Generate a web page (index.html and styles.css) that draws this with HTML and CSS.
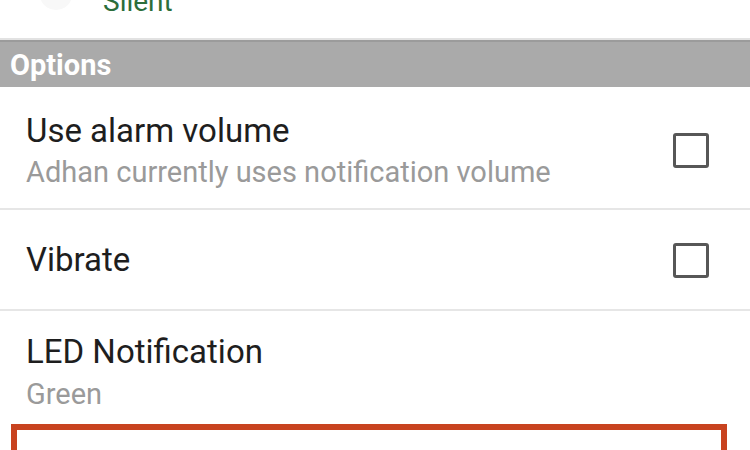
FILE: index.html
```html
<!DOCTYPE html>
<html lang="en">
<head>
  <meta charset="UTF-8" />
  <meta name="viewport" content="width=device-width, initial-scale=1.0"/>
  <title>Adhan Settings</title>
  <link rel="stylesheet" href="styles.css">
</head>
<body>
  <div class="prefs">
    <!-- sound row, scrolled mostly out of view -->
    <div class="pref prev">
      <div class="pref-icon"></div>
      <div class="pref-text">
        <div class="summary green">Silent</div>
      </div>
      <div class="chevron"></div>
    </div>

    <div class="category">Options</div>

    <div class="pref">
      <div class="pref-text">
        <div class="title">Use alarm volume</div>
        <div class="summary">Adhan currently uses notification volume</div>
      </div>
      <div class="checkbox"></div>
    </div>

    <div class="pref single">
      <div class="pref-text">
        <div class="title">Vibrate</div>
      </div>
      <div class="checkbox"></div>
    </div>

    <div class="pref last">
      <div class="pref-text">
        <div class="title">LED Notification</div>
        <div class="summary">Green</div>
      </div>
    </div>

    <!-- highlighted row below -->
    <div class="pref marked"></div>
  </div>
</body>
</html>
```

FILE: styles.css
```css
body {
  margin: 0;
  background: #fff;
  font-family: Roboto, "Noto Sans", sans-serif;
  overflow: hidden;
}

.prefs {
  width: 750px;
}

.pref {
  display: flex;
  align-items: center;
  padding: 24px 41px 18px 26px;
  border-bottom: 2px solid #e6e6e6;
}

.pref-text {
  flex: 1;
}

.title {
  font-size: 33px;
  line-height: 40px;
  color: #1e1e1e;
}

.summary {
  font-size: 29px;
  line-height: 36px;
  margin-top: 3px;
  color: #9a9a9a;
}

.summary.green {
  font-size: 28px;
  color: #2c6e3b;
  margin-top: 0;
}

.prev {
  margin-top: -16px;
  padding: 0 41px 18px 40px;
  border-bottom-color: #e2e2e2;
}

.pref-icon {
  width: 32px;
  height: 30px;
  margin-top: -14px;
  margin-right: 31px;
  border-radius: 50%;
  background: #f8f8f8;
}

.chevron {
  width: 12px;
  height: 20px;
  margin-top: -26px;
  margin-right: 20px;
  background: #f4f4f4;
}

.category {
  height: 45px;
  border-top: 2px solid #9b9b9b;
  background: #aaaaaa;
  color: #fff;
  font-weight: bold;
  font-size: 29px;
  line-height: 46px;
  padding-left: 10px;
}

.single {
  padding-top: 30px;
  padding-bottom: 29px;
}

.last {
  padding-top: 21px;
  padding-bottom: 12px;
  border-bottom: none;
}

.last .summary {
  margin-top: 4px;
}

.checkbox {
  width: 30px;
  height: 29px;
  border: 3px solid #575757;
  border-radius: 3px;
}

.marked {
  margin-left: 11px;
  width: 704px;
  height: 80px;
  padding: 0;
  border: 6px solid #c8431f;
}
```
